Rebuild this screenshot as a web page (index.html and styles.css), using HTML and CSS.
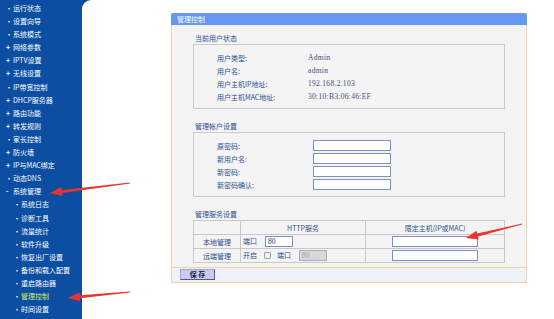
FILE: index.html
```html
<!DOCTYPE html>
<html lang="zh-CN">
<head>
<meta charset="utf-8">
<title>管理控制</title>
<link rel="stylesheet" href="styles.css">
</head>
<body>
<div class="app">
  <nav class="side">
    <ul class="menu">
      <li class="dot">运行状态</li>
      <li class="dot">设置向导</li>
      <li class="dot">系统模式</li>
      <li class="plus">网络参数</li>
      <li class="plus">IPTV设置</li>
      <li class="plus">无线设置</li>
      <li class="dot">IP带宽控制</li>
      <li class="plus">DHCP服务器</li>
      <li class="plus">路由功能</li>
      <li class="plus">转发规则</li>
      <li class="dot">家长控制</li>
      <li class="plus">防火墙</li>
      <li class="plus">IP与MAC绑定</li>
      <li class="dot">动态DNS</li>
      <li class="minus">系统管理</li>
      <li class="dot sub">系统日志</li>
      <li class="dot sub">诊断工具</li>
      <li class="dot sub">流量统计</li>
      <li class="dot sub">软件升级</li>
      <li class="dot sub">恢复出厂设置</li>
      <li class="dot sub">备份和载入配置</li>
      <li class="dot sub">重启路由器</li>
      <li class="dot sub active">管理控制</li>
      <li class="dot sub">时间设置</li>
    </ul>
  </nav>
  <main class="content">
    <section class="panel">
      <div class="panel-head">管理控制</div>
      <div class="panel-body">
        <div class="group">
          <div class="group-title">当前用户状态</div>
          <div class="box">
            <div class="row"><span class="lbl">用户类型:</span><span class="val">Admin</span></div>
            <div class="row"><span class="lbl">用户名:</span><span class="val">admin</span></div>
            <div class="row"><span class="lbl">用户主机IP地址:</span><span class="val">192.168.2.103</span></div>
            <div class="row"><span class="lbl">用户主机MAC地址:</span><span class="val">30:10:B3:06:46:EF</span></div>
          </div>
        </div>
        <div class="group">
          <div class="group-title">管理帐户设置</div>
          <div class="box">
            <div class="row row-in"><span class="lbl">原密码:</span><input class="field" type="password"></div>
            <div class="row row-in"><span class="lbl">新用户名:</span><input class="field" type="text"></div>
            <div class="row row-in"><span class="lbl">新密码:</span><input class="field" type="password"></div>
            <div class="row row-in"><span class="lbl">新密码确认:</span><input class="field" type="password"></div>
          </div>
        </div>
        <div class="group">
          <div class="group-title">管理服务设置</div>
          <table class="svc">
            <colgroup><col class="c1"><col class="c2"><col class="c3"></colgroup>
            <tr><td></td><td class="ctr">HTTP服务</td><td class="ctr">限定主机(IP或MAC)</td></tr>
            <tr>
              <td class="ctr">本地管理</td>
              <td class="left"><span>端口</span><input class="port" type="text" value="80"></td>
              <td class="ctr"><input class="host" type="text"></td>
            </tr>
            <tr>
              <td class="ctr">远端管理</td>
              <td class="left"><span>开启</span><input class="chk" type="checkbox"><span class="lp">端口</span><input class="port off" type="text" value="80" disabled></td>
              <td class="ctr"><input class="host" type="text"></td>
            </tr>
          </table>
        </div>
      </div>
      <div class="panel-foot"><button class="save" type="button">保 存</button></div>
    </section>
  </main>
  <svg class="arrows" width="554" height="319" viewBox="0 0 554 319">
    <polygon points="50,193 62.5,196 62.1,193 130.1,183.5 129.9,182.5 61.7,190 61.3,187"/>
    <polygon points="68,298 80.3,301.3 80,298.3 130.05,292.5 129.95,291.5 79.8,295.3 79.5,292.3"/>
    <polygon points="466,238 478.7,239.5 478,236.6 522.1,224.5 521.9,223.5 477.2,233.6 476.5,230.7"/>
  </svg>
</div>
</body>
</html>
```
FILE: styles.css
```css
* { box-sizing: border-box; }
html, body { margin: 0; padding: 0; background: #fff; }
body {
  font-family: "Noto Sans CJK SC", "DejaVu Sans", sans-serif;
  font-size: 7px;
}
.app {
  position: relative;
  display: flex;
  width: 554px;
  height: 319px;
  background: #0b4ea2;
  overflow: hidden;
}
.side {
  width: 82px;
  flex: none;
  color: #fff;
}
.menu {
  list-style: none;
  margin: 0;
  padding: 2px 0 0 0;
}
.menu li {
  height: 13.1px;
  line-height: 13.1px;
  padding-left: 6px;
  white-space: nowrap;
}
.menu li::before {
  display: inline-block;
  width: 7px;
  font-weight: bold;
}
.menu li.dot::before { content: "•"; font-size: 6px; }
.menu li.plus::before { content: "+"; }
.menu li.minus::before { content: "-"; }
.menu li.sub { padding-left: 14px; }
.menu li.active { color: #d2ef6c; }
.menu li.active::before { color: #fff; }

.content {
  flex: 1;
  background: #fff;
  border-top-left-radius: 9px;
  padding: 13px 0 0 89px;
}
.panel {
  width: 356px;
  border: 1px solid #f5cfa6;
  background: #f4f4f4;
}
.panel-head {
  height: 12px;
  line-height: 12px;
  margin: -1px -1px 0 -1px;
  padding-left: 6px;
  background: #6698f2;
  color: #fff;
  border-radius: 3px 3px 0 0;
}
.panel-body {
  padding: 8px 21px 4px 21px;
}
.group + .group { margin-top: 12px; }
.group-title {
  height: 11px;
  line-height: 11px;
  padding-left: 2px;
  color: #2a4f8e;
}
.box {
  border: 1px solid #c9c9c9;
  padding: 6px 0 5px 23px;
}
.row {
  display: grid;
  grid-template-columns: 91px auto;
  align-items: center;
  height: 13px;
  color: #2a4f8e;
}
.row-in { grid-template-columns: 96px auto; }
.val {
  font-family: "Liberation Serif", serif;
  font-size: 7.5px;
  letter-spacing: 0.3px;
  color: #3a4f7a;
}
.field {
  width: 78px;
  height: 11px;
  margin: 0;
  padding: 0 2px;
  border: 1px solid #7e8fc6;
  background: #fff;
  font-size: 7px;
}
.svc {
  width: 100%;
  border-collapse: collapse;
  table-layout: fixed;
  color: #2a4f8e;
}
.svc .c1 { width: 47px; }
.svc .c2 { width: 125px; }
.svc td {
  height: 14px;
  padding: 0;
  border: 1px solid #c8c8c8;
  white-space: nowrap;
  vertical-align: middle;
}
.svc td.ctr { text-align: center; }
.svc td.left { padding-left: 2px; }
.port {
  width: 28px;
  height: 11px;
  margin: 0 0 0 8px;
  padding: 0 2px;
  border: 1px solid #7e8fc6;
  background: #fff;
  font-family: "Liberation Serif", serif;
  font-size: 7.5px;
  color: #333;
  vertical-align: middle;
}
.port.off {
  background: #d8d8d8;
  border-color: #a9a9b8;
  color: #a0a0a0;
}
.chk {
  appearance: none;
  -webkit-appearance: none;
  width: 7px;
  height: 7px;
  margin: 0 0 0 7px;
  border: 1px solid #a8a8a8;
  border-radius: 1px;
  background: #eeeeee;
  vertical-align: middle;
}
.lp { margin-left: 6px; }
.host {
  width: 86px;
  height: 11px;
  margin: 0;
  padding: 0 2px;
  border: 1px solid #7e8fc6;
  background: #fff;
  vertical-align: middle;
}
.panel-foot {
  border-top: 1px solid #f5cfa6;
  height: 15px;
  padding: 1px 0 0 8px;
  background: #eef3fa;
}
.save {
  width: 35px;
  height: 11px;
  margin: 0;
  padding: 0;
  border: 1px solid #5b5b6e;
  border-top-color: #a4a6c8;
  border-left-color: #a4a6c8;
  background: #c8cbf3;
  font-family: "Noto Sans CJK SC", sans-serif;
  font-size: 7px;
  font-weight: bold;
  line-height: 9px;
  color: #1c1c3c;
  display: block;
}
.arrows {
  position: absolute;
  left: 0;
  top: 0;
  pointer-events: none;
}
.arrows polygon { fill: #e8352c; }
```
